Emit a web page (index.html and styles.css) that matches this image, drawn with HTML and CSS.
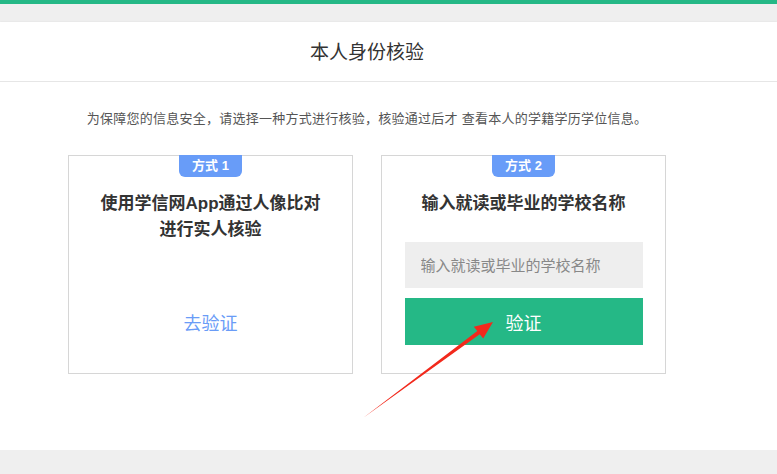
FILE: index.html
```html
<!DOCTYPE html>
<html lang="zh-CN">
<head>
  <meta charset="UTF-8">
  <title>本人身份核验</title>
  <link rel="stylesheet" href="styles.css">
</head>
<body>
  <div class="top-bar"></div>
  <div class="panel">
    <div class="panel-inner">
      <h2 class="panel-title">本人身份核验</h2>
      <p class="tip">为保障您的信息安全，请选择一种方式进行核验，核验通过后才 查看本人的学籍学历学位信息。</p>
      <div class="cards">
        <div class="card">
          <span class="badge">方式 1</span>
          <h3 class="card-title">使用学信网App通过人像比对进行实人核验</h3>
          <a class="go-link" href="#">去验证</a>
        </div>
        <div class="card">
          <span class="badge">方式 2</span>
          <h3 class="card-title">输入就读或毕业的学校名称</h3>
          <input class="school-input" type="text" placeholder="输入就读或毕业的学校名称">
          <button class="verify-btn">验证</button>
        </div>
      </div>
    </div>
  </div>

  <!-- 标注箭头 -->
  <svg class="arrow" width="777" height="474" viewBox="0 0 777 474">
    <polygon points="363,418 477.3,331.1 473.8,326.8 493,322 483.2,338.6 479.7,334.3" fill="#f2291c"/>
  </svg>
</body>
</html>
```

FILE: styles.css
```css
body {
  margin: 0;
  background: #efefef;
  font-family: "Liberation Sans", "Noto Sans CJK SC", sans-serif;
  color: #333;
}

.top-bar {
  height: 4px;
  background: #25b886;
  margin-bottom: 18px;
}

.panel {
  background: #fff;
  height: 428px;
  box-shadow: 0 0 2px rgba(0, 0, 0, 0.08);
}

.panel-inner {
  width: 734px;
}

.panel-title {
  margin: 0;
  height: 60px;
  line-height: 61px;
  text-align: center;
  font-size: 19px;
  font-weight: normal;
  color: #333;
  border-bottom: 1px solid #e6e6e6;
  width: 777px;
  box-sizing: border-box;
  padding-right: 43px;
}

.tip {
  margin: 27px 0 0;
  font-size: 13px;
  line-height: 20px;
  letter-spacing: 0.25px;
  color: #555;
  text-align: center;
}

.cards {
  display: flex;
  justify-content: center;
  gap: 28px;
  margin-top: 26px;
}

.card {
  width: 285px;
  height: 219px;
  box-sizing: border-box;
  border: 1px solid #d6d6d6;
  display: flex;
  flex-direction: column;
  align-items: center;
  padding: 0 23px 28px;
}

.badge {
  margin-top: -1px;
  width: 63px;
  height: 22px;
  line-height: 22px;
  background: #689cf8;
  color: #fff;
  font-size: 13px;
  font-weight: bold;
  text-align: center;
  border-radius: 0 0 6px 6px;
}

.card-title {
  margin: 14px 0 0;
  font-size: 17px;
  line-height: 26px;
  font-weight: bold;
  text-align: center;
  color: #333;
  padding: 0 5px;
}

.go-link {
  margin-top: auto;
  height: 47px;
  line-height: 53px;
  font-size: 18px;
  color: #6a9cf7;
  text-decoration: none;
}

.school-input {
  margin-top: 25px;
  width: 238px;
  height: 47px;
  box-sizing: border-box;
  border: none;
  background: #eeeeee;
  padding: 0 16px;
  font-family: inherit;
  font-size: 15px;
  outline: none;
}

.school-input::placeholder {
  color: #888;
}

.verify-btn {
  margin-top: 10px;
  width: 238px;
  height: 47px;
  border: none;
  background: #25b886;
  color: #fff;
  font-family: inherit;
  font-size: 18px;
  cursor: pointer;
}

.arrow {
  position: absolute;
  top: 0;
  left: 0;
  pointer-events: none;
}
```
